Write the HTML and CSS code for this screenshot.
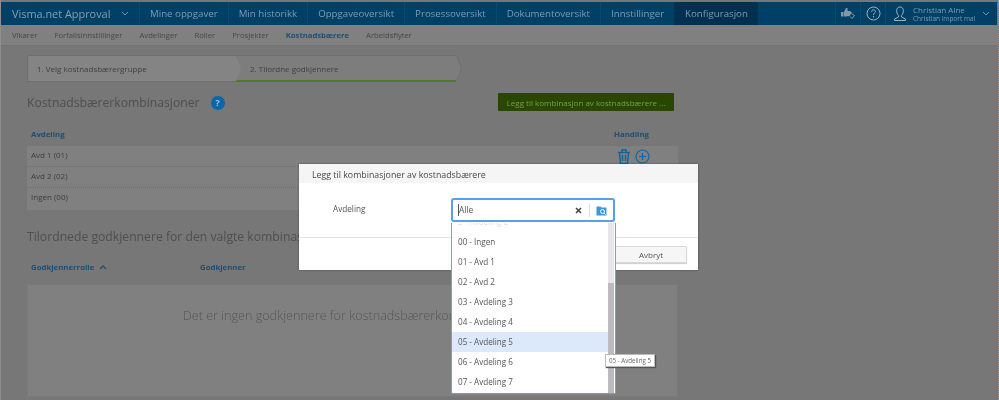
FILE: index.html
```html
<!DOCTYPE html>
<html lang="no">
<head>
<meta charset="utf-8">
<title>Visma.net Approval</title>
<link rel="stylesheet" href="styles.css">
</head>
<body>
<div class="screen">
  <header class="topbar">
    <div class="brand">Visma.net Approval
      <svg class="chev" width="8" height="5" viewBox="0 0 8 5"><path d="M1 1l3 3 3-3" fill="none" stroke="#6f92a8" stroke-width="1"/></svg>
    </div>
    <nav class="mainnav">
      <a>Mine oppgaver</a><a>Min historikk</a><a>Oppgaveoversikt</a><a>Prosessoversikt</a><a>Dokumentoversikt</a><a>Innstillinger</a><a class="active">Konfigurasjon</a>
    </nav>
    <div class="tools">
      <div class="tool thumb">
        <svg width="16" height="14" viewBox="0 0 16 14"><path d="M1 5h2.500v4.500H1zM4 5l2-4h1.500v3H10l2 1.500-2.500 3.500L6 9.500H4z" fill="#8499a8"/><path d="M11.500 6.500l3 2-2.500 3-2-2" fill="none" stroke="#8499a8" stroke-width="1"/></svg>
      </div>
      <div class="tool help">
        <svg width="15" height="15" viewBox="0 0 15 15"><circle cx="7.500" cy="7.500" r="6.500" fill="none" stroke="#9db3c1" stroke-width="1"/><path d="M5.600 5.800c0-2.600 3.800-2.600 3.800-.2 0 1.500-1.900 1.500-1.900 3.200" fill="none" stroke="#9db3c1" stroke-width="1"/><circle cx="7.500" cy="10.800" r=".7" fill="#9db3c1"/></svg>
      </div>
      <div class="user">
        <svg width="14" height="16" viewBox="0 0 14 16"><path d="M4 7c-1-3 0-6 3-6s4 3 3 6c-.3 1-1 2-1.500 2.500v1.500l4 2v1.500H1.500V13l4-2V9.500C5 9 4.300 8 4 7z" fill="none" stroke="#9db3c1" stroke-width="1"/></svg>
        <div class="username">
          <span class="name">Christian Alne</span>
          <span class="org">Christian import mal</span>
        </div>
        <svg class="chev" width="8" height="5" viewBox="0 0 8 5"><path d="M1 1l3 3 3-3" fill="none" stroke="#6f92a8" stroke-width="1"/></svg>
      </div>
    </div>
  </header>

  <nav class="subnav">
    <a>Vikarer</a><a>Forfallsinnstillinger</a><a>Avdelinger</a><a>Roller</a><a>Prosjekter</a><a class="active">Kostnadsbærere</a><a>Arbeidsflyter</a>
  </nav>

  <main class="content">
    <div class="stepper">
      <div class="step">1. Velg kostnadsbærergruppe</div>
      <div class="step current">2. Tilordne godkjennere</div>
    </div>

    <div class="headline">
      <h2>Kostnadsbærerkombinasjoner</h2>
      <span class="qmark">?</span>
      <button class="addbtn">Legg til kombinasjon av kostnadsbærere ...</button>
    </div>

    <div class="thead"><span>Avdeling</span><span class="th-action">Handling</span></div>
    <div class="rows">
      <div class="row">Avd 1 (01)
        <span class="actions">
          <svg width="14" height="15" viewBox="0 0 14 15"><path d="M1 3.500h12M5 3V1h4v2M2.500 3.500l1 11h7l1-11M5.500 6v6M8.500 6v6" fill="none" stroke="#15659c" stroke-width="1.500"/></svg>
          <svg width="15" height="15" viewBox="0 0 15 15"><circle cx="7.500" cy="7.500" r="6.500" fill="none" stroke="#15659c" stroke-width="1.200"/><path d="M7.500 4v7M4 7.500h7" stroke="#15659c" stroke-width="1.200"/></svg>
        </span>
      </div>
      <div class="row">Avd 2 (02)</div>
      <div class="row">Ingen (00)</div>
    </div>

    <h2 class="second">Tilordnede godkjennere for den valgte kombinasjonen</h2>

    <div class="thead lower">
      <span class="th-role">Godkjennerrolle <svg width="8" height="5" viewBox="0 0 8 5"><path d="M1 4l3-3 3 3" fill="none" stroke="#1d4f73" stroke-width="1.300"/></svg></span>
      <span>Godkjenner</span>
    </div>
    <div class="empty">Det er ingen godkjennere for kostnadsbærerkombinasjonen</div>
  </main>

  <div class="modal">
    <div class="modal-title">Legg til kombinasjoner av kostnadsbærere</div>
    <div class="modal-body">
      <label class="field-label">Avdeling</label>
      <div class="input">
        <span class="value">Alle</span>
        <svg class="clear" width="7" height="7" viewBox="0 0 7 7"><path d="M1 1l5 5M6 1l-5 5" stroke="#444" stroke-width="1.500"/></svg>
        <span class="divider"></span>
        <svg width="11" height="11" viewBox="0 0 11 11"><path d="M.5 1.500h4l1 1h5v8h-10z" fill="#3b97e0"/><circle cx="6.500" cy="6.500" r="2" fill="none" stroke="#fff" stroke-width="1"/><path d="M8 8l1.500 1.500" stroke="#fff"/></svg>
      </div>
    </div>
    <div class="modal-foot"><button class="cancel">Avbryt</button></div>
  </div>

  <div class="dropdown">
    <div class="list">
      <div class="cutoff">2 - Avdeling 2</div>
      <div class="opt">00 - Ingen</div>
      <div class="opt">01 - Avd 1</div>
      <div class="opt">02 - Avd 2</div>
      <div class="opt">03 - Avdeling 3</div>
      <div class="opt">04 - Avdeling 4</div>
      <div class="opt hover">05 - Avdeling 5</div>
      <div class="opt">06 - Avdeling 6</div>
      <div class="opt">07 - Avdeling 7</div>
    </div>
    <div class="scroll"><div class="thumbbar"></div></div>
  </div>
  <div class="tooltip">05 - Avdeling 5</div>
</div>
</body>
</html>
```

FILE: styles.css
```css
* { box-sizing: border-box; }
html, body { margin: 0; padding: 0; }
body { width: 999px; height: 400px; overflow: hidden; background: #777; font-family: "Open Sans", sans-serif; }
.screen { position: relative; width: 999px; height: 400px; background: #777; padding-top: 2px; border-left: 1px solid #8f8f8f; border-right: 1px dotted #6f9ccc; filter: blur(.5px); overflow: hidden; }

.topbar { display: flex; align-items: stretch; height: 23px; background: #003f66; margin-right: 1px; }
.brand { width: 138px; padding-left: 11px; font-size: 10.900px; line-height: 23px; color: #86a0b2; display: flex; align-items: center; gap: 11px; white-space: nowrap; }
.mainnav { display: flex; }
.mainnav a { padding: 0 10px; font-size: 9.700px; line-height: 23px; color: #7f9cb0; border-left: 1px solid #0b4a70; white-space: nowrap; }
.mainnav a.active { background: #00304f; border-left-color: #00304f; }
.tools { margin-left: auto; display: flex; align-items: center; }
.tool { width: 25px; height: 23px; display: flex; align-items: center; justify-content: center; border-left: 1px solid #0b4a70; }
.user { display: flex; align-items: center; width: 112px; height: 23px; padding-left: 7px; border-left: 1px solid #0b4a70; }
.username { display: flex; flex-direction: column; width: 62px; margin: 0 7px 0 6px; }
.name { font-size: 8px; line-height: 9px; color: #7f9cb0; white-space: nowrap; }
.org { font-size: 6.500px; line-height: 9px; color: #7f9cb0; white-space: nowrap; }

.subnav { display: flex; gap: 17px; height: 21px; padding-left: 11px; background: #808080; border-bottom: 1px solid #727272; align-items: center; font-size: 7.700px; color: #474747; }
.subnav a.active { font-weight: 700; color: #1d4f73; }

.content { padding: 9px 0 0 26px; width: 677px; }
.stepper { display: flex; width: 429px; height: 27px; }
.step { position: relative; width: 209px; padding-left: 9px; font-size: 8px; line-height: 25px; color: #3f3f3f; background: #848484; border: 1px solid #6f6f6f; border-right: 0; }
.step.current { width: 220px; padding-left: 13px; border-bottom: 2px solid #4f7a1e; background: #7d7d7d; }
.step::before, .step::after { content: ""; position: absolute; top: 0; width: 5px; height: 25px; clip-path: polygon(0 0, 100% 50%, 0 100%); }
.step::before { right: -6px; background: #6f6f6f; }
.step::after { right: -5px; background: #848484; z-index: 1; }
.step.current::after { background: #7d7d7d; }

.headline { display: flex; align-items: center; height: 20px; margin-top: 11px; }
h2 { margin: 0; font-weight: 400; font-size: 12.200px; line-height: 20px; color: #4f4f4f; white-space: nowrap; }
.qmark { margin-left: 11px; width: 14px; height: 14px; border-radius: 50%; background: #0a66a8; color: #9cc4e0; font-size: 9px; font-weight: 700; line-height: 14px; text-align: center; }
.addbtn { margin-left: auto; margin-right: 4px; margin-top: -2px; width: 176px; height: 18px; padding: 0; border: 0; border-radius: 1px; background: #294700; color: #7d9a57; font: 400 8px "Open Sans", sans-serif; white-space: nowrap; }

.thead { display: flex; justify-content: space-between; height: 13px; margin-top: 15px; padding: 0 29px 0 4px; font-size: 7.800px; line-height: 13px; font-weight: 700; color: #1d4f73; }
.rows { margin-top: 5px; }
.row { position: relative; height: 21px; padding-left: 4px; font-size: 8px; line-height: 18px; color: #3d3d3d; background: #808080; border-bottom: 1px dotted #6e6e6e; }
.row:last-child { height: 22px; border-bottom: 0; }
.actions { position: absolute; left: 590px; top: 3px; display: flex; gap: 4px; align-items: flex-start; }

.second { margin-top: 17px; }
.thead.lower { justify-content: flex-start; margin-top: 14px; padding-right: 0; }
.th-role { width: 169px; display: flex; align-items: center; gap: 5px; }
.empty { height: 113px; margin-top: 10px; padding-top: 22px; background: #808080; border: 1px solid #7a7a7a; font-size: 12.600px; font-weight: 300; line-height: 18px; color: #565656; text-align: center; white-space: nowrap; overflow: hidden; }

.modal { position: absolute; left: 298px; top: 164px; width: 399px; height: 106px; background: #fff; box-shadow: 0 0 2px rgba(0,0,0,.4); }
.modal-title { height: 19px; padding-left: 13px; background: #f5f5f5; font-size: 8.800px; line-height: 22px; color: #494949; white-space: nowrap; }
.modal-body { height: 55px; padding: 15px 0 0 34px; display: flex; border-bottom: 1px solid #e6e6e6; }
.field-label { width: 118px; font-size: 8.200px; line-height: 22px; color: #555; }
.input { width: 164px; height: 24px; display: flex; align-items: center; padding: 0 6px 0 5px; border: 2px solid #5a9fee; border-radius: 3px; background: #fff; }
.value { flex: 1; font-size: 8.400px; color: #555; border-left: 1px solid #555; line-height: 12px; }
.clear { margin-right: 7px; }
.divider { width: 1px; height: 13px; background: #ddd; margin-right: 6px; }
.modal-foot { display: flex; justify-content: flex-end; padding: 8px 11px 0 0; }
.cancel { width: 72px; height: 17px; padding: 0; border: 1px solid #d9d9d9; border-radius: 1px; background: #f6f6f6; box-shadow: 0 1px 1px #ccc; font: 8px "Open Sans", sans-serif; color: #555; }

.dropdown { position: absolute; left: 450px; top: 223px; width: 165px; height: 171px; display: flex; background: #fff; border: 1px solid #6f9fdc; border-top: 0; border-radius: 0 0 2px 2px; overflow: hidden; }
.list { flex: 1; }
.cutoff { height: 16px; padding-left: 6px; margin-top: -7px; font-size: 8.100px; line-height: 12px; color: #ddd; overflow: hidden; }
.opt { height: 20px; padding-left: 6px; font-size: 8.100px; line-height: 20px; color: #555; }
.opt.hover { background: #dce9fb; }
.scroll { width: 6px; background: #e6e6e6; margin-right: 1px; padding-top: 60px; }
.thumbbar { height: 111px; background: #bbb; }
.tooltip { position: absolute; left: 604px; top: 354px; width: 50px; height: 13px; background: #fff; border: 1px solid #bbb; box-shadow: 1px 1px 1px #555; font-size: 6.200px; line-height: 11px; padding-left: 3px; color: #666; white-space: nowrap; }
```
